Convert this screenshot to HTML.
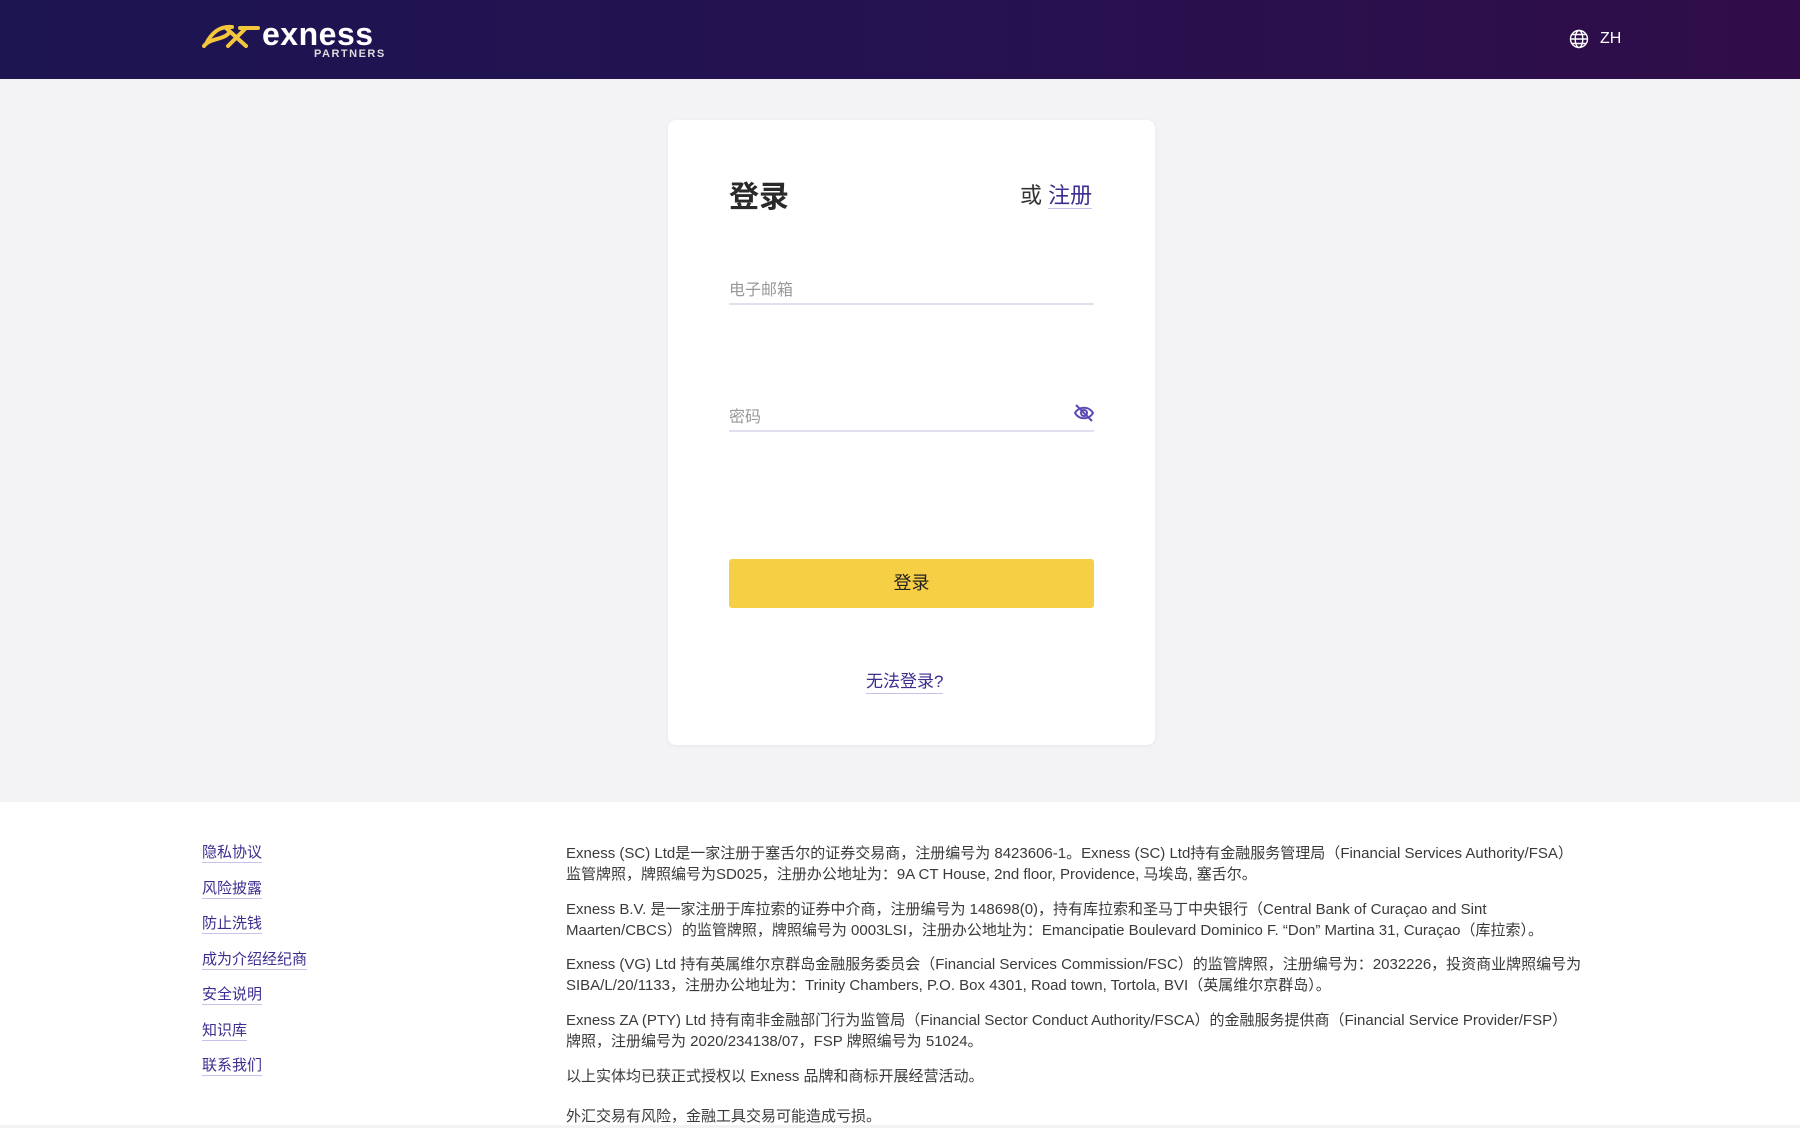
<!DOCTYPE html>
<html><head><meta charset="utf-8"><style>
*{margin:0;padding:0;box-sizing:border-box}
body{width:1800px;height:1125px;overflow:hidden;background:#f3f2f5;font-family:"Liberation Sans","Noto Sans CJK SC",sans-serif;position:relative}
.hdr{position:absolute;left:0;top:0;width:1800px;height:79px;background:linear-gradient(90deg,#1d1452 0%,#251250 50%,#300d48 100%)}
.card{position:absolute;left:668px;top:120px;width:487px;height:625px;background:#fff;border-radius:8px;box-shadow:0 1px 4px rgba(0,0,0,.05)}
.a{position:absolute;white-space:nowrap}
.foot{position:absolute;left:0;top:802px;width:1800px;height:323px;background:#fff}
.lk{position:absolute;left:202px;font-size:15px;color:#3b2e8f;border-bottom:1px solid #c8c2ea;line-height:19px}
.ft{position:absolute;left:566px;width:1050px;font-size:15px;line-height:20.5px;color:#3a3a3a}
</style></head><body>
<div class="hdr">
 <svg class="a" style="left:202px;top:24px" width="58" height="24" viewBox="0 0 58 24"><path d="M4 20 C10 8 18 2 30 3 M2 22 C8 14 20 16 26 10 M24 4 L44 22 M44 4 L26 22 M38 4 L56 4" stroke="#f4c63b" stroke-width="4" fill="none" stroke-linecap="round"/></svg>
 <div class="a" style="left:262px;top:16px;font-size:32px;font-weight:bold;color:#fff;letter-spacing:0.5px">exness</div>
 <div class="a" style="left:314px;top:48px;font-size:11px;font-weight:bold;color:#ddd;letter-spacing:1.5px">PARTNERS</div>
 <svg class="a" style="left:1569px;top:29px" width="20" height="20" viewBox="0 0 20 20" fill="none" stroke="#fff" stroke-width="1.4"><circle cx="10" cy="10" r="8.5"/><ellipse cx="10" cy="10" rx="3.8" ry="8.5"/><path d="M1.5 10h17M3 5.5h14M3 14.5h14"/></svg>
 <div class="a" style="left:1600px;top:30px;font-size:16px;color:#fff">ZH</div>
</div>
<div class="card">
 <div class="a" style="left:61px;top:52px;font-size:30px;font-weight:bold;color:#2a2a2a">登录</div>
 <div class="a" style="left:352px;top:58px;font-size:22px;color:#333">或 <span style="color:#3b2e8f;border-bottom:1px solid #c8c2ea">注册</span></div>
 <div class="a" style="left:61px;top:156px;font-size:16px;color:#999">电子邮箱</div>
 <div class="a" style="left:61px;top:183px;width:365px;height:2px;background:#e2dff0"></div>
 <div class="a" style="left:61px;top:283px;font-size:16px;color:#999">密码</div>
 <svg class="a" style="left:405px;top:283px" width="22" height="20" viewBox="0 0 22 20" fill="none" stroke="#5a4bb5" stroke-width="2"><path d="M2 10 C6 3 16 3 20 10 C16 17 6 17 2 10Z"/><circle cx="11" cy="10" r="3"/><path d="M3 2 L19 18"/></svg>
 <div class="a" style="left:61px;top:310px;width:365px;height:2px;background:#e2dff0"></div>
 <div class="a" style="left:61px;top:439px;width:365px;height:49px;background:#f6cf45;border-radius:3px;text-align:center;line-height:49px;font-size:18px;color:#222">登录</div>
 <div class="a" style="left:198px;top:551px;font-size:17px;color:#3b2e8f;border-bottom:1px solid #c8c2ea;line-height:22px">无法登录?</div>
</div>
<div class="foot"></div>
<div class="lk" style="top:843px">隐私协议</div>
<div class="lk" style="top:879px">风险披露</div>
<div class="lk" style="top:914px">防止洗钱</div>
<div class="lk" style="top:950px">成为介绍经纪商</div>
<div class="lk" style="top:985px">安全说明</div>
<div class="lk" style="top:1021px">知识库</div>
<div class="lk" style="top:1056px">联系我们</div>
<div class="ft" style="top:844px">Exness (SC) Ltd是一家注册于塞舌尔的证券交易商，注册编号为 8423606-1。Exness (SC) Ltd持有金融服务管理局（Financial Services Authority/FSA）<br>监管牌照，牌照编号为SD025，注册办公地址为：9A CT House, 2nd floor, Providence, 马埃岛, 塞舌尔。</div>
<div class="ft" style="top:900px">Exness B.V. 是一家注册于库拉索的证券中介商，注册编号为 148698(0)，持有库拉索和圣马丁中央银行（Central Bank of Curaçao and Sint<br>Maarten/CBCS）的监管牌照，牌照编号为 0003LSI，注册办公地址为：Emancipatie Boulevard Dominico F. “Don” Martina 31, Curaçao（库拉索）。</div>
<div class="ft" style="top:955px">Exness (VG) Ltd 持有英属维尔京群岛金融服务委员会（Financial Services Commission/FSC）的监管牌照，注册编号为：2032226，投资商业牌照编号为<br>SIBA/L/20/1133，注册办公地址为：Trinity Chambers, P.O. Box 4301, Road town, Tortola, BVI（英属维尔京群岛）。</div>
<div class="ft" style="top:1011px">Exness ZA (PTY) Ltd 持有南非金融部门行为监管局（Financial Sector Conduct Authority/FSCA）的金融服务提供商（Financial Service Provider/FSP）<br>牌照，注册编号为 2020/234138/07，FSP 牌照编号为 51024。</div>
<div class="ft" style="top:1067px">以上实体均已获正式授权以 Exness 品牌和商标开展经营活动。</div>
<div class="ft" style="top:1107px">外汇交易有风险，金融工具交易可能造成亏损。</div>
</body></html>
